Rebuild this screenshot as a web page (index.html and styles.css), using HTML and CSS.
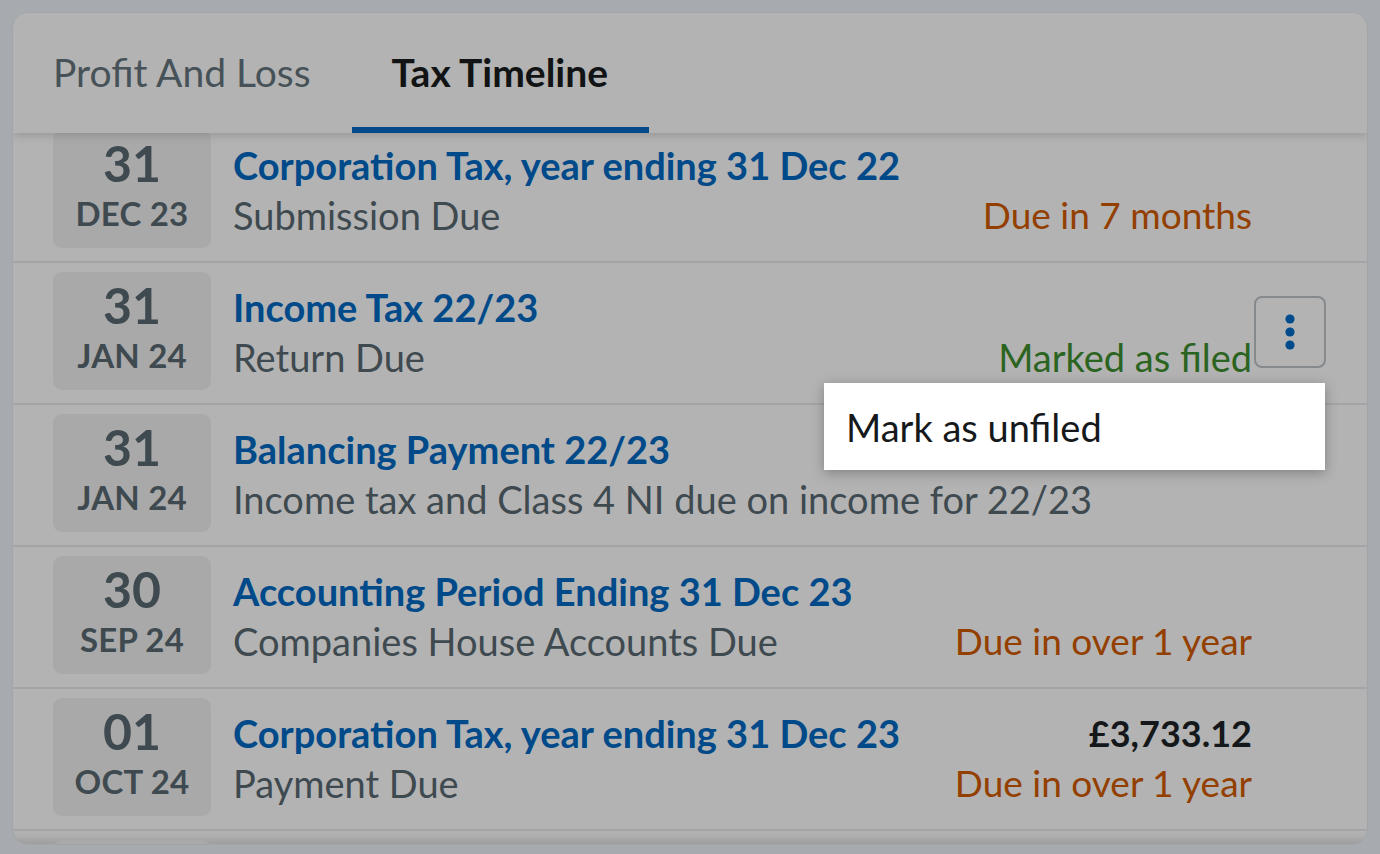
FILE: index.html
```html
<!DOCTYPE html>
<html lang="en">
<head>
<meta charset="utf-8">
<title>Tax Timeline</title>
<link rel="stylesheet" href="styles.css">
</head>
<body>
<div class="card">
  <div class="tabs">
    <div class="tab">Profit And Loss</div>
    <div class="tab active">Tax Timeline</div>
  </div>
  <div class="list">
    <div class="rows">
      <div class="row">
        <div class="date"><span class="day">31</span><span class="mon">DEC 23</span></div>
        <div class="main"><div class="title">Corporation Tax, year ending 31 Dec 22</div><div class="sub">Submission Due</div></div>
        <div class="meta"><div class="amount"></div><div class="status due">Due in 7 months</div></div>
        <div class="action"></div>
      </div>
      <div class="row">
        <div class="date"><span class="day">31</span><span class="mon">JAN 24</span></div>
        <div class="main"><div class="title">Income Tax 22/23</div><div class="sub">Return Due</div></div>
        <div class="meta"><div class="amount"></div><div class="status filed">Marked as filed</div></div>
        <div class="action">
          <button class="kebab" type="button" aria-label="More actions">
            <svg width="14" height="40" viewBox="0 0 14 40"><circle cx="7" cy="7" r="4.6" fill="#004b8b"/><circle cx="7" cy="20" r="4.6" fill="#004b8b"/><circle cx="7" cy="33" r="4.6" fill="#004b8b"/></svg>
          </button>
          <div class="menu"><div class="menu-item">Mark as unfiled</div></div>
        </div>
      </div>
      <div class="row">
        <div class="date"><span class="day">31</span><span class="mon">JAN 24</span></div>
        <div class="main"><div class="title">Balancing Payment 22/23</div><div class="sub">Income tax and Class 4 NI due on income for 22/23</div></div>
        <div class="meta"><div class="amount"></div><div class="status"></div></div>
        <div class="action"></div>
      </div>
      <div class="row">
        <div class="date"><span class="day">30</span><span class="mon">SEP 24</span></div>
        <div class="main"><div class="title">Accounting Period Ending 31 Dec 23</div><div class="sub">Companies House Accounts Due</div></div>
        <div class="meta"><div class="amount"></div><div class="status due">Due in over 1 year</div></div>
        <div class="action"></div>
      </div>
      <div class="row">
        <div class="date"><span class="day">01</span><span class="mon">OCT 24</span></div>
        <div class="main"><div class="title">Corporation Tax, year ending 31 Dec 23</div><div class="sub">Payment Due</div></div>
        <div class="meta"><div class="amount">£3,733.12</div><div class="status due">Due in over 1 year</div></div>
        <div class="action"></div>
      </div>
      <div class="row">
        <div class="date"></div>
        <div class="main"></div>
        <div class="action"></div>
      </div>
    </div>
  </div>
</div>
</body>
</html>
```
FILE: styles.css
```css
* { box-sizing: border-box; }
html, body { margin: 0; height: 100%; }
body {
  background: #a7aaaf;
  padding: 12px;
  font-family: "Lato", "Liberation Sans", sans-serif;
  overflow: hidden;
}
.card {
  height: 833px;
  background: #b3b3b3;
  border: 1px solid #a1a4a8;
  border-radius: 16px;
  display: flex;
  flex-direction: column;
  overflow: hidden;
}
.tabs {
  height: 120px;
  flex: none;
  display: flex;
  position: relative;
  z-index: 2;
  background: #b3b3b3;
  box-shadow: 0 3px 8px rgba(0, 0, 0, 0.14);
}
.tab {
  padding: 4px 41px 0 40px;
  display: flex;
  align-items: center;
  font-size: 39px;
  color: #465258;
  border-bottom: 6px solid transparent;
  white-space: nowrap;
}
.tab.active {
  color: #111314;
  font-weight: 700;
  border-bottom-color: #00498a;
}
.list {
  flex: 1;
  overflow: hidden;
  position: relative;
  box-shadow: inset 0 -12px 10px -8px rgba(0, 0, 0, 0.14);
}
.rows { margin-top: -12px; }
.row {
  height: 142px;
  display: flex;
  align-items: center;
  padding: 0 41px 2px 40px;
  border-bottom: 2px solid #a4a4a8;
}
.date {
  width: 158px;
  height: 118px;
  flex: none;
  background: #a9a9a9;
  border-radius: 9px;
  display: flex;
  flex-direction: column;
  align-items: center;
  justify-content: flex-start;
  padding-top: 7px;
  color: #3e4a50;
  font-weight: 700;
  margin-top: -2px;
}
.day { font-size: 50px; line-height: 52px; }
.mon { font-size: 33px; line-height: 40px; margin-top: 4px; letter-spacing: 0.2px; }
.main {
  flex: 1;
  min-width: 0;
  margin-left: 22px;
}
.title, .sub, .amount, .status {
  height: 50px;
  line-height: 50px;
  font-size: 38px;
  white-space: nowrap;
}
.title { color: #004a8a; font-weight: 700; }
.sub { color: #3e4a50; }
.meta { text-align: right; }
.amount { color: #15181a; font-weight: 700; font-size: 36px; }
.status { font-size: 37px; }
.status.due { color: #933f00; }
.status.filed { color: #2b6421; font-size: 38px; }
.action {
  width: 72px;
  height: 72px;
  flex: none;
  margin-left: 2px;
  position: relative;
}
.kebab {
  width: 72px;
  height: 72px;
  padding: 0;
  background: #b3b3b3;
  border: 2px solid #868a8d;
  border-radius: 8px;
  display: flex;
  align-items: center;
  justify-content: center;
}
.menu {
  position: absolute;
  top: 87px;
  right: 1px;
  width: 501px;
  height: 87px;
  background: #ffffff;
  box-shadow: 0 3px 12px rgba(0, 0, 0, 0.28);
  z-index: 5;
  display: flex;
  align-items: center;
  padding-left: 22px;
}
.menu-item {
  font-size: 38px;
  color: #16191b;
  white-space: nowrap;
}
```
